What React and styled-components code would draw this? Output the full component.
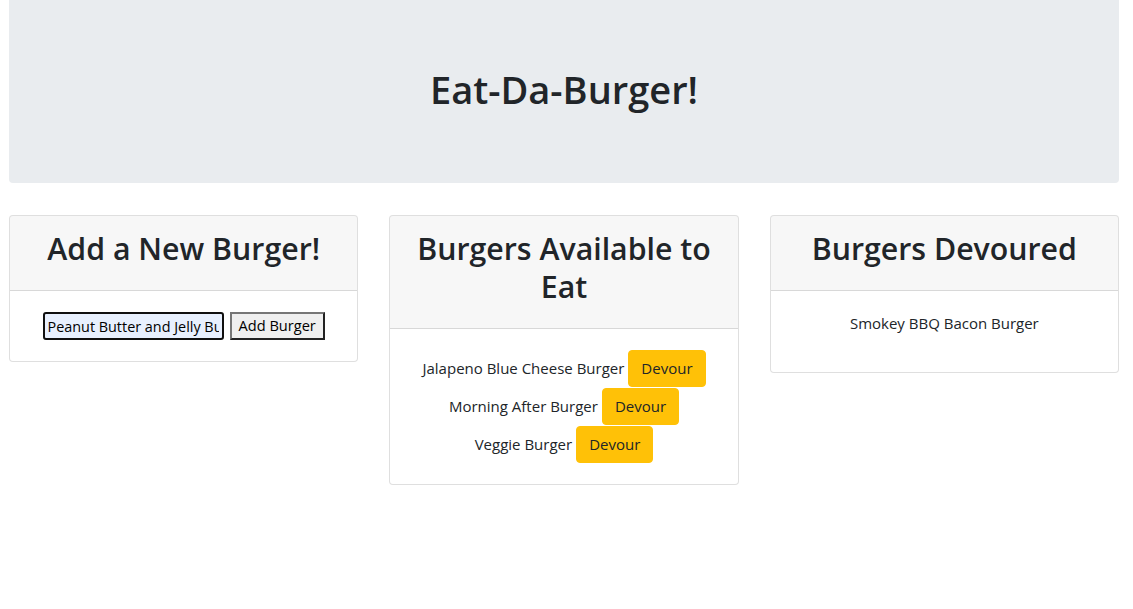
import React from "react";
import styled, { createGlobalStyle } from "styled-components";

const GlobalStyle = createGlobalStyle`
  body {
    margin: 0;
    background: #fff;
    color: #212529;
    font-family: "Open Sans", "Noto Sans", sans-serif;
    font-size: 15px;
    line-height: 1.5;
  }
  * { box-sizing: border-box; }
`;

const burgers = [
  { id: 1, name: "Jalapeno Blue Cheese Burger", devoured: false },
  { id: 2, name: "Morning After Burger", devoured: false },
  { id: 3, name: "Veggie Burger", devoured: false },
  { id: 4, name: "Smokey BBQ Bacon Burger", devoured: true },
];

const App = () => {
  const available = burgers.filter((b) => !b.devoured);
  const eaten = burgers.filter((b) => b.devoured);

  return (
    <Page>
      <GlobalStyle />
      <Jumbotron>
        <Title>Eat-Da-Burger!</Title>
      </Jumbotron>
      <Row>
        <Card>
          <CardHeader>
            <HeaderTitle>Add a New Burger!</HeaderTitle>
          </CardHeader>
          <FormBody>
            <NameInput type="text" defaultValue="Peanut Butter and Jelly Burger" />
            <AddButton type="button">Add Burger</AddButton>
          </FormBody>
        </Card>

        <Card>
          <CardHeader>
            <HeaderTitle>Burgers Available to Eat</HeaderTitle>
          </CardHeader>
          <ListBody>
            {available.map((b) => (
              <BurgerRow key={b.id}>
                {b.name}
                <DevourButton type="button">Devour</DevourButton>
              </BurgerRow>
            ))}
          </ListBody>
        </Card>

        <Card>
          <CardHeader>
            <HeaderTitle>Burgers Devoured</HeaderTitle>
          </CardHeader>
          <EatenBody>
            {eaten.map((b) => (
              <EatenItem key={b.id}>{b.name}</EatenItem>
            ))}
          </EatenBody>
        </Card>
      </Row>
    </Page>
  );
};

export default App;

const Page = styled.div`
  padding: 0 14px 0 9px;
`;

const Jumbotron = styled.header`
  height: 183px;
  padding-bottom: 4px;
  background: #e9ecef;
  border-radius: 0 0 4px 4px;
  display: flex;
  align-items: center;
  justify-content: center;
`;

const Title = styled.h1`
  margin: 0;
  font-size: 38px;
  font-weight: 600;
  line-height: 1.2;
`;

const Row = styled.main`
  display: grid;
  grid-template-columns: repeat(3, 1fr);
  column-gap: 31px;
  align-items: start;
  margin-top: 32px;
`;

const Card = styled.section`
  border: 1px solid rgba(0, 0, 0, 0.125);
  border-radius: 4px;
  background: #fff;
  overflow: hidden;
`;

const CardHeader = styled.div`
  background: rgba(0, 0, 0, 0.03);
  border-bottom: 1px solid rgba(0, 0, 0, 0.125);
  padding: 14px 16px 15px;
  text-align: center;
`;

const HeaderTitle = styled.h1`
  margin: 0 0 7px;
  font-size: 30.3px;
  font-weight: 600;
  line-height: 38px;
`;

const FormBody = styled.div`
  padding: 21px 18px;
  display: flex;
  justify-content: center;
  align-items: center;
  gap: 6px;
`;

const NameInput = styled.input`
  width: 181px;
  height: 28px;
  padding: 0 3px;
  border: 2px solid #101010;
  border-radius: 3px;
  background: #e8f0fe;
  color: #000;
  font: inherit;
  font-size: 14.4px;
  outline: none;
`;

const AddButton = styled.button`
  height: 28px;
  padding: 0 7px;
  background: #efefef;
  border: 2px solid #222;
  border-top-color: #767676;
  border-left-color: #767676;
  color: #000;
  font: inherit;
  font-size: 14.6px;
`;

const ListBody = styled.div`
  padding: 20px 18px 21px;
  text-align: center;
`;

const BurgerRow = styled.div`
  height: 38px;
  display: flex;
  justify-content: center;
  align-items: center;
  gap: 4px;
`;

const DevourButton = styled.button`
  height: 37px;
  padding: 0 12px;
  background: #ffc107;
  border: 1px solid #ffc107;
  border-radius: 4px;
  color: #212529;
  font: inherit;
  font-size: 15px;
`;

const EatenBody = styled.div`
  padding: 21px 18px 17px;
  text-align: center;
`;

const EatenItem = styled.p`
  margin: 0 0 20px;
`;
